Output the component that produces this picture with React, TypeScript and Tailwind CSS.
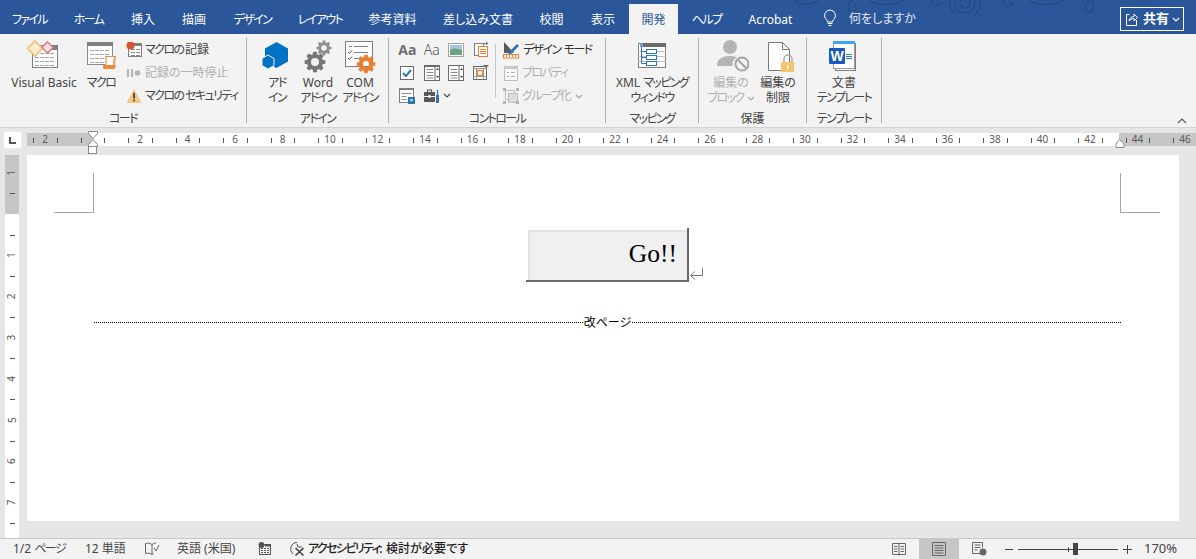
import React from "react";

const tabs = [
  { name: "ファイル", w: "w-[59px]" },
  { name: "ホーム", w: "w-[59px]" },
  { name: "挿入", w: "w-[50px]" },
  { name: "描画", w: "w-[52px]" },
  { name: "デザイン", w: "w-[65px]" },
  { name: "レイアウト", w: "w-[70px]" },
  { name: "参考資料", w: "w-[75px]" },
  { name: "差し込み文書", w: "w-[96px]" },
  { name: "校閲", w: "w-[51px]" },
  { name: "表示", w: "w-[52px]" },
  { name: "開発", w: "w-[49px]", active: true },
  { name: "ヘルプ", w: "w-[57px]" },
  { name: "Acrobat", w: "w-[71px]" },
];

// the reference font has narrow kana, so tighten katakana runs only
const T = ({ children }: { children: string }) => (
  <span>
    {children.split(/([\u30a0-\u30ff]+)/).map((part, i) =>
      i % 2 === 1 ? (
        <span key={i} className="tracking-[-1.6px]">
          {part}
        </span>
      ) : (
        part
      )
    )}
  </span>
);

const gearPath = (cx: number, cy: number, r: number, hole: number, teeth = 8) => {
  const pts: string[] = [];
  const step = (Math.PI * 2) / teeth;
  for (let i = 0; i < teeth; i++) {
    const a = i * step;
    [
      [-0.3, 0.76],
      [-0.18, 1],
      [0.18, 1],
      [0.3, 0.76],
    ].forEach(([o, k]) => {
      const an = a + o * step * 1.2;
      pts.push((cx + Math.cos(an) * r * k).toFixed(2) + " " + (cy + Math.sin(an) * r * k).toFixed(2));
    });
  }
  return (
    "M" + pts.join("L") + "Z" +
    `M${cx - hole} ${cy}a${hole} ${hole} 0 1 0 ${hole * 2} 0a${hole} ${hole} 0 1 0 -${hole * 2} 0Z`
  );
};

const Big = ({ children }: { children: React.ReactNode }) => (
  <svg width="36" height="36" viewBox="0 0 36 36" className="shrink-0">
    {children}
  </svg>
);

const Small = ({ children }: { children: React.ReactNode }) => (
  <svg width="16" height="16" viewBox="0 0 16 16" className="shrink-0">
    {children}
  </svg>
);

const Chevron = ({ color = "#a6a6a6" }: { color?: string }) => (
  <svg width="8" height="5" viewBox="0 0 8 5" className="inline-block ml-[3px] align-middle">
    <path d="M1 1l3 3 3-3" fill="none" stroke={color} strokeWidth="1.1" />
  </svg>
);

const Rows = ({ x, y, w, n, gap = 4, color = "#a6a6a6" }: { x: number; y: number; w: number; n: number; gap?: number; color?: string }) => (
  <>
    {Array.from({ length: n }).map((_, i) => (
      <path key={i} d={`M${x} ${y + i * gap + 0.5}h${w}`} stroke={color} strokeWidth="1" strokeDasharray="4 1" />
    ))}
  </>
);

const VbIcon = () => (
  <Big>
    <rect x="6.5" y="7.5" width="25" height="22" fill="#fff" stroke="#7f7f7f" />
    <rect x="24" y="7" width="8" height="5" fill="#7f7f7f" />
    <Rows x={9} y={15} w={20} n={4} />
    <path d="M9 3l7.5 7.5L9 18l-7.5-7.5z" fill="#fbeccb" stroke="#eec27a" strokeWidth="1.6" />
    <path d="M21.5 4l5.5 5.5-5.5 5.5-5.5-5.5z" fill="#fbe3e5" stroke="#df7c8a" strokeWidth="1.6" />
  </Big>
);

const MacroIcon = () => (
  <Big>
    <rect x="4.5" y="4.5" width="25" height="22" fill="#fff" stroke="#8a8a8a" />
    <rect x="4" y="4" width="26" height="4" fill="#7f7f7f" />
    <Rows x={7} y={12} w={20} n={4} />
    <path d="M22.5 18.5h10c-1 3-1 7 0 10h-1" fill="#fff" stroke="#ed8b3a" />
    <path d="M22.5 18.5c1 3 1 6 0 9h8.5c-.6-3-.6-6 1-9z" fill="#fff" stroke="#ed8b3a" />
    <rect x="20" y="27" width="12" height="4" rx="1" fill="#ed8b3a" />
  </Big>
);

const AddinIcon = () => (
  <Big>
    <path d="M17.5 4L29 10.5V23.5L17.5 30 6 23.5V10.5z" fill="#0072c6" />
    <path d="M9 17l6 3.5v7L9 31l-6-3.5v-7z" fill="#0072c6" stroke="#f3f3f3" strokeWidth="1" />
  </Big>
);

const WordAddinIcon = () => (
  <Big>
    <path d={gearPath(15, 24, 10.5, 4)} fill="#767676" fillRule="evenodd" />
    <path d={gearPath(24, 10, 7.5, 2.8)} fill="#8f8f8f" fillRule="evenodd" />
  </Big>
);

const ComIcon = () => (
  <Big>
    <rect x="3.5" y="3.5" width="27" height="25" fill="#fff" stroke="#7f7f7f" />
    <path d="M7 8.5h3M12 8.5h14M12 14.5h14M12 20.5h6" stroke="#7f7f7f" />
    <path d="M6 14l1.5 1.5L10 12.5M6 20l1.5 1.5L10 18.5" fill="none" stroke="#555" />
    <path d={gearPath(24, 26, 9.5, 3, 8)} fill="#ed7d31" fillRule="evenodd" />
  </Big>
);

const MappingIcon = () => (
  <Big>
    <rect x="4.5" y="5.5" width="27" height="24" fill="#fff" stroke="#7f7f7f" />
    <rect x="8" y="5" width="24" height="4" fill="#6b6b6b" />
    <path d="M4 13.5h28M4 18.5h28M4 23.5h28" stroke="#c0c0c0" />
    <path d="M6 5h3v4H6z" fill="#6b9fd0" />
    <path d="M7.5 9v16M7.5 13.5h5M7.5 19.5h5M7.5 25.5h5" stroke="#2e75b6" fill="none" />
    <rect x="12.5" y="11.5" width="10" height="4" fill="#fff" stroke="#2e75b6" />
    <rect x="12.5" y="17.5" width="10" height="4" fill="#fff" stroke="#2e75b6" />
    <rect x="12.5" y="23.5" width="10" height="4" fill="#fff" stroke="#2e75b6" />
  </Big>
);

const BlockIcon = () => (
  <Big>
    <circle cx="17" cy="9" r="7" fill="#b5b5b5" />
    <path d="M4 28c0-7 5-10 13-10 3 0 5 .5 7 1.5-4 2-5 5-4 8.5z" fill="#b5b5b5" />
    <circle cx="29" cy="26" r="6.5" fill="#f3f3f3" stroke="#a6a6a6" strokeWidth="2" />
    <path d="M25 22l8 8" stroke="#a6a6a6" strokeWidth="2" />
  </Big>
);

const RestrictIcon = () => (
  <Big>
    <path d="M8.5 4.5h14l7 7v21h-21z" fill="#fff" stroke="#7a7a7a" />
    <path d="M22.5 4.5v7h7" fill="none" stroke="#7a7a7a" />
    <path d="M24 24v-3a4 4 0 0 1 8 0v3" fill="none" stroke="#a6a6a6" strokeWidth="1.4" />
    <rect x="21" y="24" width="13" height="10" fill="#f5c46c" />
    <rect x="27" y="27" width="1.5" height="4" fill="#fff" />
  </Big>
);

const TemplateIcon = () => (
  <Big>
    <rect x="9.5" y="5.5" width="20" height="27" fill="#fff" stroke="#7f7f7f" />
    <rect x="7.5" y="3.5" width="21" height="27" fill="#fff" stroke="#9a9a9a" />
    <rect x="7" y="3" width="22" height="3" fill="#41a5ee" />
    <rect x="3" y="10" width="16" height="16" rx="1" fill="#185abd" />
    <text x="11" y="23" textAnchor="middle" fontSize="14" fontWeight="700" fill="#fff" fontFamily="Liberation Sans, sans-serif">W</text>
    <path d="M20 16.5h6M20 18.5h6M20 20.5h6" stroke="#2b7cd3" />
  </Big>
);

const RecordIcon = () => (
  <Small>
    <rect x="2.5" y="1.5" width="13" height="13" fill="#fff" stroke="#7f7f7f" />
    <rect x="8" y="1" width="8" height="3" fill="#7f7f7f" />
    <Rows x={5} y={7} w={9} n={3} gap={3} color="#8a8a8a" />
    <circle cx="4.5" cy="3.5" r="4" fill="#d9512c" />
  </Small>
);

const PauseIcon = () => (
  <Small>
    <rect x="1" y="4" width="2" height="8" fill="#b4b4b4" />
    <rect x="5" y="4" width="2" height="8" fill="#b4b4b4" />
    <circle cx="11.5" cy="8" r="2.8" fill="#b4b4b4" />
  </Small>
);

const WarnIcon = () => (
  <Small>
    <path d="M8 1l7.5 14H.5z" fill="#f3c784" />
    <rect x="7.2" y="5" width="1.8" height="5.5" fill="#444" />
    <rect x="7.2" y="11.5" width="1.8" height="1.8" fill="#444" />
  </Small>
);

const DesignIcon = () => (
  <svg width="17" height="18" viewBox="0 0 17 18" className="shrink-0">
    <path d="M1 1v11h10z" fill="#595959" />
    <path d="M6 11L14 3l2 2-8 8-3 1z" fill="#2e75b6" />
    <rect x="0.5" y="13.5" width="15" height="3.5" fill="#fff" stroke="#ed7d31" />
    <path d="M3.5 14v2M6.5 14v2M9.5 14v2M12.5 14v2" stroke="#ed7d31" />
  </svg>
);

const PropIcon = () => (
  <Small>
    <rect x="1.5" y="1.5" width="13" height="14" fill="#f8f8f8" stroke="#bdbdbd" />
    <rect x="1" y="1" width="14" height="3" fill="#c8c8c8" />
    <path d="M4 7.5h2M8 7.5h4M4 11.5h2M8 11.5h4" stroke="#b0b0b0" />
  </Small>
);

const GroupIcon = () => (
  <Small>
    <rect x="2.5" y="2.5" width="9" height="9" fill="none" stroke="#bdbdbd" />
    <rect x="5.5" y="5.5" width="9" height="9" fill="#dcdcdc" stroke="#bdbdbd" />
    <path d="M0 0h3v3H0zM13 0h3v3h-3zM0 13h3v3H0zM13 13h3v3h-3z" fill="#b4b4b4" />
  </Small>
);

const ImageCtl = () => (
  <Small>
    <rect x="0.5" y="1.5" width="15" height="13" fill="#fff" stroke="#a6a6a6" />
    <rect x="2" y="3" width="12" height="5" fill="#a9c6dc" />
    <path d="M2 8c3-2 6-2 12 0v5H2z" fill="#6ba484" />
  </Small>
);

const ComboCtl = () => (
  <Small>
    <rect x="1.5" y="1.5" width="9" height="12" fill="#fff" stroke="#7f7f7f" />
    <rect x="5.5" y="4.5" width="9" height="10" fill="#fff" stroke="#ed7d31" />
    <path d="M7 7.5h6M7 9.5h6M7 11.5h6" stroke="#ed7d31" />
    <path d="M11 1.5h3.5M13 0l2 1.5-2 1.5" fill="none" stroke="#7f7f7f" />
  </Small>
);

const CheckCtl = () => (
  <Small>
    <rect x="1.5" y="1.5" width="13" height="13" fill="#fff" stroke="#6b6b6b" />
    <path d="M4 8l3 3 5-6" fill="none" stroke="#2e75b6" strokeWidth="2" />
  </Small>
);

const ListCtl = ({ box = false }: { box?: boolean }) => (
  <Small>
    <rect x="0.5" y="0.5" width="15" height="15" fill="#fff" stroke="#6b6b6b" />
    {box ? null : <rect x="0" y="0" width="16" height="2" fill="#6b6b6b" />}
    <path d="M2.5 4.5h7M2.5 7.5h7M2.5 10.5h7M2.5 13h7" stroke="#8a8a8a" />
    <path d="M11 0v16" stroke="#6b6b6b" />
    <path d="M12 5l1.5-2L15 5zM12 11l1.5 2 1.5-2z" fill="#444" />
  </Small>
);

const DateCtl = () => (
  <Small>
    <rect x="0.5" y="1.5" width="13" height="13" fill="#fff" stroke="#6b6b6b" />
    <path d="M0 3.5h14M3.5 3v11M10.5 3v11M0 11.5h14" stroke="#9a9a9a" />
    <rect x="4.5" y="5.5" width="5" height="5" fill="#fff" stroke="#ed7d31" strokeWidth="1.3" />
    <path d="M10 0h6l-3 3z" fill="#6b6b6b" />
  </Small>
);

const FormCtl = () => (
  <Small>
    <rect x="0.5" y="0.5" width="14" height="14" fill="#fff" stroke="#7f7f7f" />
    <rect x="0" y="0" width="15" height="2" fill="#7f7f7f" />
    <path d="M2.5 5.5h10M2.5 8.5h5M2.5 11.5h5" stroke="#8a8a8a" />
    <rect x="9" y="9" width="7" height="7" fill="#2e75b6" />
    <path d="M10.5 11.5h4l-2 2z" fill="#fff" />
  </Small>
);

const ToolboxCtl = () => (
  <Small>
    <rect x="0" y="4" width="11" height="10" fill="#595959" />
    <path d="M3.5 4V2h4v2" fill="none" stroke="#595959" strokeWidth="1.2" />
    <rect x="0" y="8" width="11" height="1" fill="#f3f3f3" />
    <rect x="4.5" y="7" width="2" height="3" fill="#f3f3f3" />
    <path d="M13.5 2v5" stroke="#2e75b6" strokeWidth="1.2" />
    <rect x="12" y="7" width="3" height="8" fill="#2e75b6" />
  </Small>
);

const BigButton = ({ w, icon, lines, muted }: { w: string; icon: React.ReactNode; lines: React.ReactNode[]; muted?: boolean }) => (
  <div className={`${w} flex flex-col items-center shrink-0`}>
    {icon}
    <div className={`mt-[1px] text-center leading-[15px] whitespace-nowrap ${muted ? "text-[#b1b1b1]" : "text-[#444444]"}`}>
      {lines.map((l, i) => (
        <div key={i}>{typeof l === "string" ? <T>{l}</T> : l}</div>
      ))}
    </div>
  </div>
);

const SmallRow = ({ icon, text, muted, dark, after }: { icon: React.ReactNode; text: string; muted?: boolean; dark?: boolean; after?: React.ReactNode }) => (
  <div className={`h-[23px] flex items-center gap-[3px] whitespace-nowrap ${muted ? "text-[#b1b1b1]" : dark ? "text-[#333333]" : "text-[#444444]"}`}>
    {icon}
    <span>
      <T>{text}</T>
      {after}
    </span>
  </div>
);

const Group = ({ w, label, className, children }: { w: string; label: string; className?: string; children: React.ReactNode }) => (
  <div className={`${w} h-[85px] mt-[4px] shrink-0 flex flex-col border-r border-[#b1b1b1]`}>
    <div className={`h-[72px] flex ${className ?? ""}`}>{children}</div>
    <div className="h-[13px] text-center leading-[18px] text-[#444444]">
      <T>{label}</T>
    </div>
  </div>
);

const HORIZONTAL = 47.5;
const ORIGIN_X = 65.5;

const TopRuler = () => {
  const ticks = Array.from({ length: 100 }).map((_, i) => ORIGIN_X + (HORIZONTAL / 4) * (2 * (i - 6) + 1));
  const nums = Array.from({ length: 25 }).map((_, i) => i * 2 - 2).filter((n) => n !== 0);
  return (
    <svg width="1169" height="27" viewBox="0 0 1169 27" className="shrink-0">
      <rect x="0" y="5" width="66" height="13" fill="#c6c6c6" />
      <rect x="66" y="5" width="1026" height="13" fill="#ffffff" />
      <rect x="1092" y="5" width="77" height="13" fill="#c6c6c6" />
      {ticks.map((x, i) =>
        x > 0 && x < 1169 ? <rect key={i} x={Math.round(x)} y="10" width="1" height="5" fill="#555555" /> : null
      )}
      {nums.map((n) => {
        const x = ORIGIN_X + (n * HORIZONTAL) / 2;
        return (
          <text key={n} x={x} y="15" textAnchor="middle" fontSize="10" fill="#595959">
            {Math.abs(n)}
          </text>
        );
      })}
      <path d="M61.5 3.5h9v2l-4.5 5-4.5-5z" fill="#fff" stroke="#8a8a8a" />
      <path d="M66 11.5l4.5 5v2h-9v-2z" fill="#fff" stroke="#8a8a8a" />
      <rect x="61.5" y="18.5" width="8" height="7" fill="#fff" stroke="#8a8a8a" />
      <path d="M1092.5 11.5l4.5 4.5v3.5h-8V16z" fill="#fff" stroke="#8a8a8a" />
    </svg>
  );
};

const SideRuler = () => {
  const step = 41.2;
  const origin = 59;
  const nums = [-1, 1, 2, 3, 4, 5, 6, 7];
  const ticks = [-0.5, 0.5, 1.5, 2.5, 3.5, 4.5, 5.5, 6.5, 7.5];
  return (
    <svg width="14" height="383" viewBox="0 0 14 383" className="shrink-0">
      <rect x="0" y="0" width="14" height="59" fill="#c6c6c6" />
      <rect x="0" y="59" width="14" height="324" fill="#ffffff" />
      {ticks.map((t) => (
        <rect key={t} x="5" y={Math.round(origin + t * step)} width="5" height="1" fill="#555555" />
      ))}
      {nums.map((n) => {
        const y = origin + n * step;
        return (
          <text key={n} x="7" y={y} transform={`rotate(-90 7 ${y})`} dy="3.5" textAnchor="middle" fontSize="10" fill="#595959">
            {Math.abs(n)}
          </text>
        );
      })}
    </svg>
  );
};

export default function App() {
  return (
    <div className="relative w-[1196px] h-[559px] overflow-hidden flex flex-col bg-[#e6e6e6] text-[12px] [font-family:'Noto_Sans','Noto_Sans_CJK_JP',sans-serif] [font-feature-settings:'palt']">
      <div className="h-[34px] shrink-0 bg-[#2b579a] flex relative">
        <svg width="320" height="14" viewBox="0 0 320 14" className="absolute left-[790px] top-0">
          <g fill="none" stroke="#24497f" strokeWidth="1.2">
            <path d="M5 0c4 6 16 6 23 0" />
            <path d="M62 0c-6 5-5 11 0 11s5-5 2-7" />
            <path d="M80 0c5 6 24 6 33 0" />
            <path d="M142 0c-1 3 0 6 3 6s4-2 6-3" />
            <circle cx="175" cy="3" r="5" />
            <circle cx="175" cy="3" r="10" />
            <circle cx="175" cy="3" r="15" />
            <path d="M213 0c0 4 3 6 6 6s4-2 3-4" />
            <path d="M240 0c5 6 24 6 33 0" />
            <path d="M300 0c-6 6-7 12-1 12s5-7 2-12" />
          </g>
        </svg>
        {tabs.map((t) => (
          <div
            key={t.name}
            className={`${t.w} relative h-[30px] mt-[4px] pt-[1px] flex items-center justify-center whitespace-nowrap ${
              t.active ? "bg-[#f3f3f3] text-[#2b579a]" : "text-white"
            }`}
          >
            <T>{t.name}</T>
          </div>
        ))}
        <svg width="16" height="18" viewBox="0 0 16 18" className="relative ml-[16px] mt-[9px]">
          <path d="M8 1a5.5 5.5 0 0 0-3.5 9.7c.6.6 1 1.3 1 2.3h5c0-1 .4-1.7 1-2.3A5.5 5.5 0 0 0 8 1z" fill="none" stroke="#fff" />
          <path d="M5.5 14.5h5M6.5 16.5h3" stroke="#fff" />
        </svg>
        <div className="relative ml-[11px] mt-[4px] h-[30px] flex items-center text-[#e4e9f2] whitespace-nowrap">何をしますか</div>
        <div className="absolute left-[1120px] top-[7px] w-[64px] h-[24px] border border-white flex items-center pl-[5px] text-white">
          <svg width="12" height="14" viewBox="0 0 12 14" className="shrink-0">
            <path d="M3.5 2.5H.5v11h10V8" fill="none" stroke="#fff" />
            <path d="M3 9c.5-3 2.5-4.5 5-4.5V2l3.5 3.5L8 9V6.5C6 6.5 4 7.500 3 9z" fill="none" stroke="#fff" />
          </svg>
          <span className="ml-[5px] font-bold text-[13px]">共有</span>
          <Chevron color="#ffffff" />
        </div>
      </div>

      <div className="h-[94px] shrink-0 bg-[#f3f3f3] border-b border-[#d2d2d2] flex relative">
        <Group w="w-[247px]" label="コード" className="pl-[4px]">
          <BigButton w="w-[80px]" icon={<VbIcon />} lines={["Visual Basic"]} />
          <BigButton w="w-[34px]" icon={<MacroIcon />} lines={["マクロ"]} />
          <div className="ml-[8px] flex flex-col">
            <SmallRow icon={<RecordIcon />} text="マクロの記録" />
            <SmallRow icon={<PauseIcon />} text="記録の一時停止" muted />
            <SmallRow icon={<WarnIcon />} text="マクロのセキュリティ" />
          </div>
        </Group>

        <Group w="w-[142px]" label="アドイン" className="pl-[12px]">
          <BigButton w="w-[36px]" icon={<AddinIcon />} lines={["アド", "イン"]} />
          <BigButton w="w-[46px]" icon={<WordAddinIcon />} lines={["Word", "アドイン"]} />
          <BigButton w="w-[38px]" icon={<ComIcon />} lines={["COM", "アドイン"]} />
        </Group>

        <Group w="w-[217px]" label="コントロール" className="pl-[6px]">
          <div className="w-[98px] h-[69px] grid grid-cols-4 grid-rows-3">
            <div className="flex items-center justify-center text-[14px] font-bold text-[#707070]">Aa</div>
            <div className="flex items-center justify-center text-[14px] font-light text-[#555555]">Aa</div>
            <div className="flex items-center justify-center"><ImageCtl /></div>
            <div className="flex items-center justify-center"><ComboCtl /></div>
            <div className="flex items-center justify-center"><CheckCtl /></div>
            <div className="flex items-center justify-center"><ListCtl /></div>
            <div className="flex items-center justify-center"><ListCtl box /></div>
            <div className="flex items-center justify-center"><DateCtl /></div>
            <div className="flex items-center justify-center"><FormCtl /></div>
            <div className="flex items-center col-span-2 pl-[4px]">
              <ToolboxCtl />
              <Chevron color="#444444" />
            </div>
          </div>
          <div className="h-[54px] mt-[6px] ml-[2px] border-l border-[#c6c6c6]" />
          <div className="ml-[7px] flex flex-col">
            <SmallRow icon={<DesignIcon />} text="デザイン モード" dark />
            <SmallRow icon={<PropIcon />} text="プロパティ" muted />
            <SmallRow icon={<GroupIcon />} text="グループ化" muted after={<Chevron />} />
          </div>
        </Group>

        <Group w="w-[93px]" label="マッピング">
          <BigButton w="w-[92px]" icon={<MappingIcon />} lines={["XML マッピング", "ウィンドウ"]} />
        </Group>

        <Group w="w-[108px]" label="保護" className="pl-[2px]">
          <BigButton
            w="w-[60px]"
            muted
            icon={<BlockIcon />}
            lines={[
              "編集の",
              <>
                <T>ブロック</T>
                <Chevron />
              </>,
            ]}
          />
          <BigButton w="w-[34px]" icon={<RestrictIcon />} lines={["編集の", "制限"]} />
        </Group>

        <Group w="w-[75px]" label="テンプレート">
          <BigButton w="w-[74px]" icon={<TemplateIcon />} lines={["文書", "テンプレート"]} />
        </Group>

        <svg width="10" height="6" viewBox="0 0 10 6" className="absolute left-[1177px] top-[84px]">
          <path d="M1 5l4-4 4 4" fill="none" stroke="#555555" strokeWidth="1.1" />
        </svg>
      </div>

      <div className="h-[27px] shrink-0 flex pl-[3px]">
        <div className="w-[19px] h-[18px] mt-[3px] bg-white border border-[#ececec] flex items-center justify-center">
          <div className="w-[7px] h-[7px] border-l-2 border-b-2 border-[#555555]" />
        </div>
        <div className="ml-[5px]">
          <TopRuler />
        </div>
      </div>

      <div className="flex-1 min-h-0 flex pl-[5px]">
        <SideRuler />
        <div className="ml-[8px] w-[1152px] h-[366px] bg-white">
          <div className="flex pt-[18px] h-[58px] box-border">
            <div className="ml-[27px] w-[40px] border-r border-b border-[#a6a6a6]" />
            <div className="ml-auto mr-[19px] w-[40px] border-l border-b border-[#a6a6a6]" />
          </div>
          <div className="flex items-end ml-[499px] mt-[15px]">
            <div className="w-[163px] h-[54px] pl-[2px] pt-[2px] bg-white border-r-2 border-b-2 border-r-[#696969] border-b-[#696969]">
              <div className="h-full bg-[#f0f0f0] border-l-2 border-t-2 border-[#e3e3e3] flex items-center justify-end pb-[4px] pr-[10px] text-[25.5px] text-black [font-family:'Liberation_Serif',serif]">
                Go!!
              </div>
            </div>
            <svg width="15" height="14" viewBox="0 0 15 14" className="mb-[1px]">
              <path d="M13.5 1v7.5H2M6 4.5L1.5 8.5 6 12.5" fill="none" stroke="#777777" />
            </svg>
          </div>
          <div className="flex items-center ml-[67px] w-[1027px] mt-[32px] h-[16px] text-[12px] text-black">
            <div className="flex-1 border-t border-dotted border-black" />
            <span className="px-[1px] pt-[1px] whitespace-nowrap">改ページ</span>
            <div className="flex-1 border-t border-dotted border-black" />
          </div>
        </div>
      </div>

      <div className="h-[21px] shrink-0 bg-[#f3f3f3] border-t border-[#c6c6c6] flex items-center pl-[13px] text-[#444444] whitespace-nowrap">
        <div className="w-[72px]"><T>1/2 ページ</T></div>
        <div className="w-[60px]">12 単語</div>
        <div className="w-[32px]">
          <svg width="15" height="14" viewBox="0 0 15 14">
            <path d="M7 2.5C5 1 3 1 .5 1.5v10c2.5-.5 4.5-.5 6.5 1 .5-.3 1-.6 1.500-.8M7 2.5v10M7 2.5C8.5 1.5 10 1 11 1" fill="none" stroke="#666666" />
            <path d="M9 6l2 3 3-6" fill="none" stroke="#666666" />
          </svg>
        </div>
        <div className="w-[81px]">英語 (米国)</div>
        <div className="w-[31px]">
          <svg width="14" height="14" viewBox="0 0 14 14">
            <circle cx="3.5" cy="3" r="3" fill="#555555" />
            <rect x="1.5" y="2.5" width="11" height="10" fill="none" stroke="#555555" />
            <rect x="7" y="2" width="6" height="2.5" fill="#555555" />
            <path d="M3 6.5h8M3 8.5h8M3 10.5h8" stroke="#555555" strokeDasharray="2 1" />
          </svg>
        </div>
        <div className="w-[19px]">
          <svg width="17" height="16" viewBox="0 0 17 16">
            <path d="M8 1.5A6.5 6.5 0 0 0 4 13" fill="none" stroke="#555555" />
            <path d="M8 3l1 3h4" fill="none" stroke="#555555" />
            <path d="M6.5 7l8 7.500M14.5 7l-8 7.500" stroke="#444444" strokeWidth="1.7" />
          </svg>
        </div>
        <div className="text-[#222222] font-medium tracking-[0.1px]"><T>アクセシビリティ: 検討が必要です</T></div>

        <div className="ml-auto flex items-center h-full">
          <div className="w-[40px] h-full flex items-center justify-center">
            <svg width="14" height="14" viewBox="0 0 14 14">
              <path d="M.5 1.5h13v11h-13zM7 1.5v12M2 4.5h3.5M2 7h3.5M2 9.5h3.5M8.5 4.5H12M8.5 7H12M8.5 9.5H12" fill="none" stroke="#666666" />
            </svg>
          </div>
          <div className="w-[40px] h-full bg-[#c6c6c6] flex items-center justify-center">
            <svg width="14" height="14" viewBox="0 0 14 14">
              <path d="M.5.5h13v13H.5zM2.5 3.5h9M2.5 6h9M2.5 8.5h9M2.5 11h9" fill="none" stroke="#666666" />
            </svg>
          </div>
          <div className="w-[40px] h-full flex items-center justify-center">
            <svg width="15" height="14" viewBox="0 0 15 14">
              <path d="M9.5 11.5H.5V.5h10v5M2.5 3h6M2.5 5.5h6M2.5 8h3" fill="none" stroke="#666666" />
              <circle cx="11" cy="10" r="3.5" fill="#666666" />
            </svg>
          </div>
          <div className="w-[6px]" />
          <div className="w-[8px] h-[1px] bg-[#444444]" />
          <svg width="100" height="14" viewBox="0 0 100 14" className="ml-[5px]">
            <rect x="0" y="7" width="100" height="1" fill="#444444" />
            <rect x="50" y="5" width="1" height="5" fill="#444444" />
            <rect x="55" y="1" width="5" height="12" fill="#444444" />
          </svg>
          <svg width="9" height="9" viewBox="0 0 9 9" className="ml-[5px]">
            <path d="M0 4.5h9M4.5 0v9" stroke="#444444" />
          </svg>
          <div className="ml-[12px] w-[52px] text-[13px]">170%</div>
        </div>
      </div>
    </div>
  );
}
